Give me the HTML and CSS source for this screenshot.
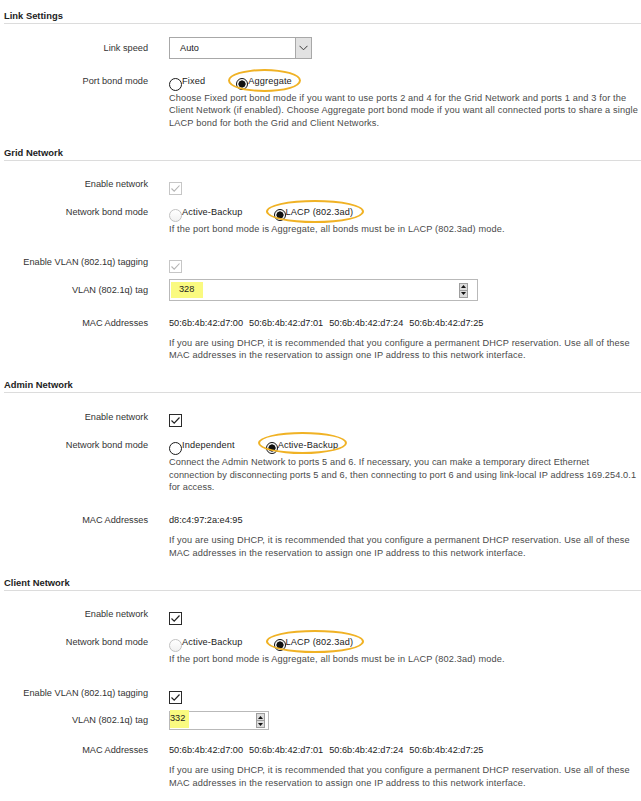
FILE: index.html
```html
<!DOCTYPE html>
<html lang="en">
<head>
<meta charset="utf-8">
<title>Network Settings</title>
<link rel="stylesheet" href="styles.css">
</head>
<body>
<div class="page">

  <section class="sec sec-first">
    <h2 class="sec-title">Link Settings</h2>
    <div class="row row-center mt-select">
      <div class="lbl">Link speed</div>
      <div class="ctl">
        <div class="select">
          <span class="select-val">Auto</span>
          <span class="select-btn"><svg width="9" height="6" viewBox="0 0 9 6"><polyline points="0.5,0.8 4.5,4.8 8.5,0.8" fill="none" stroke="#3a3a3a" stroke-width="1"/></svg></span>
        </div>
      </div>
    </div>
    <div class="row mt-bond0">
      <div class="lbl">Port bond mode</div>
      <div class="ctl">
        <div class="radios">
          <span class="opt opt-fixed"><span class="radio"></span>Fixed</span>
          <span class="opt opt-marked"><span class="radio radio-on"></span>Aggregate</span>
        </div>
        <p class="help">Choose Fixed port bond mode if you want to use ports 2 and 4 for the Grid Network and ports 1 and 3 for the Client Network (if enabled). Choose Aggregate port bond mode if you want all connected ports to share a single LACP bond for both the Grid and Client Networks.</p>
      </div>
    </div>
  </section>

  <section class="sec">
    <h2 class="sec-title">Grid Network</h2>
    <div class="row mt-first">
      <div class="lbl">Enable network</div>
      <div class="ctl"><span class="check check-dis"><svg width="11" height="11" viewBox="0 0 11 11"><polyline points="1.5,5.5 4.2,8.2 9.5,2.5" fill="none" stroke="#b4b4b4" stroke-width="1.1"/></svg></span></div>
    </div>
    <div class="row mt-m">
      <div class="lbl">Network bond mode</div>
      <div class="ctl">
        <div class="radios">
          <span class="opt opt-ab"><span class="radio radio-dis"></span>Active-Backup</span>
          <span class="opt opt-marked opt-lacp"><span class="radio radio-on"></span>LACP (802.3ad)</span>
        </div>
        <p class="help">If the port bond mode is Aggregate, all bonds must be in LACP (802.3ad) mode.</p>
      </div>
    </div>
    <div class="row mt-l">
      <div class="lbl">Enable VLAN (802.1q) tagging</div>
      <div class="ctl"><span class="check check-dis"><svg width="11" height="11" viewBox="0 0 11 11"><polyline points="1.5,5.5 4.2,8.2 9.5,2.5" fill="none" stroke="#b4b4b4" stroke-width="1.1"/></svg></span></div>
    </div>
    <div class="row row-center mt-s">
      <div class="lbl">VLAN (802.1q) tag</div>
      <div class="ctl">
        <div class="num num-long">
          <span class="num-val"><mark class="hl">328</mark></span>
          <span class="spin"><span class="spin-btn"><svg width="5" height="3" viewBox="0 0 5 3"><polygon points="2.5,0 5,3 0,3" fill="#111"/></svg></span><span class="spin-btn"><svg width="5" height="3" viewBox="0 0 5 3"><polygon points="0,0 5,0 2.5,3" fill="#111"/></svg></span></span>
        </div>
      </div>
    </div>
    <div class="row mt-mac">
      <div class="lbl">MAC Addresses</div>
      <div class="ctl">
        <div class="macs"><span>50:6b:4b:42:d7:00</span><span>50:6b:4b:42:d7:01</span><span>50:6b:4b:42:d7:24</span><span>50:6b:4b:42:d7:25</span></div>
        <p class="help help-mac">If you are using DHCP, it is recommended that you configure a permanent DHCP reservation. Use all of these MAC addresses in the reservation to assign one IP address to this network interface.</p>
      </div>
    </div>
  </section>

  <section class="sec">
    <h2 class="sec-title">Admin Network</h2>
    <div class="row mt-first">
      <div class="lbl">Enable network</div>
      <div class="ctl"><span class="check"><svg width="11" height="11" viewBox="0 0 11 11"><polyline points="1.5,5.5 4.2,8.2 9.5,2.5" fill="none" stroke="#222" stroke-width="1.2"/></svg></span></div>
    </div>
    <div class="row mt-m">
      <div class="lbl">Network bond mode</div>
      <div class="ctl">
        <div class="radios">
          <span class="opt opt-ind"><span class="radio"></span>Independent</span>
          <span class="opt opt-marked opt-ab2"><span class="radio radio-on"></span>Active-Backup</span>
        </div>
        <p class="help help-admin">Connect the Admin Network to ports 5 and 6. If necessary, you can make a temporary direct Ethernet<br>connection by disconnecting ports 5 and 6, then connecting to port 6 and using link-local IP address 169.254.0.1 for access.</p>
      </div>
    </div>
    <div class="row mt-l">
      <div class="lbl">MAC Addresses</div>
      <div class="ctl">
        <div class="macs"><span>d8:c4:97:2a:e4:95</span></div>
        <p class="help help-mac">If you are using DHCP, it is recommended that you configure a permanent DHCP reservation. Use all of these MAC addresses in the reservation to assign one IP address to this network interface.</p>
      </div>
    </div>
  </section>

  <section class="sec">
    <h2 class="sec-title">Client Network</h2>
    <div class="row mt-first">
      <div class="lbl">Enable network</div>
      <div class="ctl"><span class="check"><svg width="11" height="11" viewBox="0 0 11 11"><polyline points="1.5,5.5 4.2,8.2 9.5,2.5" fill="none" stroke="#222" stroke-width="1.2"/></svg></span></div>
    </div>
    <div class="row mt-m">
      <div class="lbl">Network bond mode</div>
      <div class="ctl">
        <div class="radios">
          <span class="opt opt-ab"><span class="radio radio-dis"></span>Active-Backup</span>
          <span class="opt opt-marked opt-lacp"><span class="radio radio-on"></span>LACP (802.3ad)</span>
        </div>
        <p class="help">If the port bond mode is Aggregate, all bonds must be in LACP (802.3ad) mode.</p>
      </div>
    </div>
    <div class="row mt-l2">
      <div class="lbl">Enable VLAN (802.1q) tagging</div>
      <div class="ctl"><span class="check"><svg width="11" height="11" viewBox="0 0 11 11"><polyline points="1.5,5.5 4.2,8.2 9.5,2.5" fill="none" stroke="#222" stroke-width="1.2"/></svg></span></div>
    </div>
    <div class="row row-center mt-s2">
      <div class="lbl">VLAN (802.1q) tag</div>
      <div class="ctl">
        <div class="num num-short">
          <span class="num-val"><mark class="hl hl-tight">332</mark></span>
          <span class="spin"><span class="spin-btn"><svg width="5" height="3" viewBox="0 0 5 3"><polygon points="2.5,0 5,3 0,3" fill="#111"/></svg></span><span class="spin-btn"><svg width="5" height="3" viewBox="0 0 5 3"><polygon points="0,0 5,0 2.5,3" fill="#111"/></svg></span></span>
        </div>
      </div>
    </div>
    <div class="row mt-mac2">
      <div class="lbl">MAC Addresses</div>
      <div class="ctl">
        <div class="macs"><span>50:6b:4b:42:d7:00</span><span>50:6b:4b:42:d7:01</span><span>50:6b:4b:42:d7:24</span><span>50:6b:4b:42:d7:25</span></div>
        <p class="help help-mac">If you are using DHCP, it is recommended that you configure a permanent DHCP reservation. Use all of these MAC addresses in the reservation to assign one IP address to this network interface.</p>
      </div>
    </div>
  </section>

</div>
</body>
</html>
```

FILE: styles.css
```css
html, body {
  margin: 0;
  padding: 0;
  background: #ffffff;
}

body {
  font-family: "Liberation Sans", Arial, sans-serif;
  font-size: 9.2px;
  color: #333333;
}

.page {
  width: 641px;
  overflow: hidden;
}

.sec {
  margin-top: 16px;
}

.sec-first {
  margin-top: 0;
  padding-top: 9px;
}

.sec-title {
  margin: 0 0 0 4px;
  font-size: 9.4px;
  font-weight: bold;
  line-height: 13px;
  color: #222222;
  padding-bottom: 1px;
  border-bottom: 1px solid #dcdcdc;
}

.row {
  display: grid;
  grid-template-columns: 148px 472px;
  column-gap: 21px;
  align-items: start;
}

.row-center {
  align-items: center;
}

.lbl {
  text-align: right;
  line-height: 13px;
  color: #333333;
  white-space: nowrap;
}

.ctl {
  line-height: 13px;
}

/* vertical rhythm */
.mt-select { margin-top: 13px; }
.mt-bond0 { margin-top: 15.5px; }
.mt-first { margin-top: 17.5px; }
.mt-m { margin-top: 11.5px; }
.mt-l { margin-top: 20px; }
.mt-l2 { margin-top: 21px; }
.mt-s { margin-top: 6.5px; }
.mt-s2 { margin-top: 7.5px; }
.mt-mac { margin-top: 15.5px; }
.mt-mac2 { margin-top: 14px; }

/* select */
.select {
  width: 141px;
  height: 20px;
  border: 1px solid #a8a8a8;
  display: flex;
  align-items: stretch;
  background: #fff;
}

.select-val {
  flex: 1;
  padding-left: 10px;
  display: flex;
  align-items: center;
  color: #222;
}

.select-btn {
  width: 15px;
  border-left: 1px solid #a8a8a8;
  background: #e2e2e2;
  display: flex;
  align-items: center;
  justify-content: center;
}

/* radios */
.radios {
  display: flex;
  height: 17px;
}

.opt {
  position: relative;
  display: inline-flex;
  align-items: flex-start;
  color: #222;
  margin-right: 31px;
  letter-spacing: 0.14px;
}

.radio {
  width: 11px;
  height: 11px;
  border: 1px solid #1a1a1a;
  border-radius: 50%;
  margin-top: 3px;
  background: #fff;
  box-sizing: content-box;
}

.radio-dis {
  border-color: #c2c2c2;
  background: linear-gradient(#ffffff, #f1f1f1);
}

.radio-on {
  border: 1.5px solid #111;
  width: 10px;
  height: 10px;
  background: radial-gradient(circle, #111 0 3.3px, #d8d8d8 3.8px, #fff 4.6px);
}

.opt-marked::after {
  content: "";
  position: absolute;
  left: -8px;
  right: -9px;
  top: -6px;
  height: 19px;
  border: 2.4px solid #f0b225;
  border-radius: 50%;
  pointer-events: none;
}

.opt-lacp::after {
  right: -11px;
}

.opt-ab2::after {
  top: -7px;
  height: 18px;
}

/* help text */
.help {
  margin: 0;
  line-height: 12.8px;
  color: #4a4a4a;
  width: 472px;
  letter-spacing: 0.15px;
}

.help-admin {
  letter-spacing: 0.1px;
}

.help-mac {
  margin-top: 7px;
}

/* checkboxes */
.check {
  display: flex;
  align-items: center;
  justify-content: center;
  width: 11px;
  height: 11px;
  border: 1px solid #2a2a2a;
  background: #fff;
  margin-top: 3.5px;
}

.check-dis {
  border-color: #c6c6c6;
}

/* number inputs */
.num {
  display: flex;
  align-items: center;
  border: 1px solid #b9b9b9;
  background: #fff;
  position: relative;
}

.num-long {
  width: 307px;
  height: 20px;
}

.num-short {
  width: 98px;
  height: 17px;
}

.num-val {
  flex: 1;
  display: flex;
  align-items: center;
  height: 100%;
  color: #222;
}

.num-long .num-val {
  padding-left: 1px;
}

.hl {
  background: #fafa80;
  color: #222;
  padding: 2px 9px 3px 8px;
  line-height: 11px;
}

.hl-tight {
  padding: 3px 4px 4px 0;
  margin-top: -4px;
}

.spin {
  display: flex;
  flex-direction: column;
  width: 9px;
  height: 15px;
}

.num-long .spin {
  margin-right: 9px;
}

.num-short .spin {
  margin-right: 3px;
}

.spin-btn {
  flex: 1;
  display: flex;
  align-items: center;
  justify-content: center;
  background: #dcdcdc;
  border: 1px solid #9e9e9e;
}

.spin-btn + .spin-btn {
  border-top: none;
}

/* macs */
.macs {
  display: flex;
  gap: 6px;
  color: #222;
}
```
